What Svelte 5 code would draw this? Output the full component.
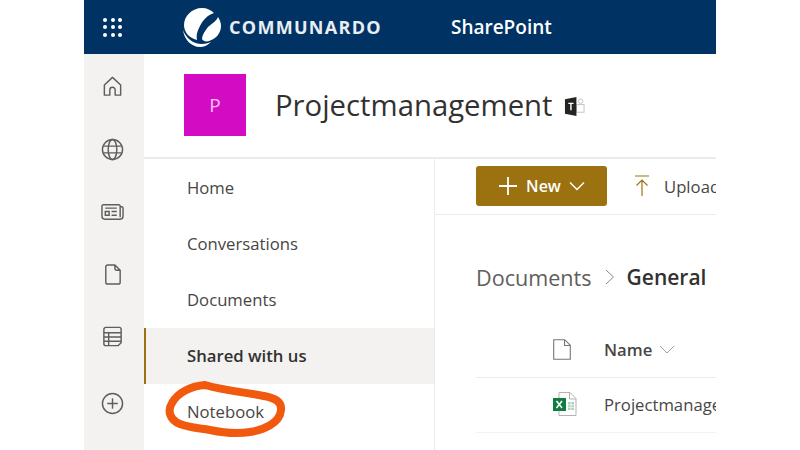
<script>
  const navItems = ['Home', 'Conversations', 'Documents', 'Shared with us', 'Notebook'];
  const dots = Array.from({ length: 9 });
</script>

<div class="page">
  <div class="frame">
    <header class="suite">
      <div class="waffle">
        {#each dots as _}
          <span></span>
        {/each}
      </div>
      <div class="logo">
        <svg width="40" height="42" viewBox="0 0 40 42">
          <path fill="#fff" d="M20 2c5 0 9 2 12 5-7 2-12 8-15 15-2 4-3 8-2 12C7 32 2 26 2 19 2 10 10 2 20 2z"/>
          <path fill="#fff" d="M36 11c2 3 3 6 3 9 0 7-5 13-12 15-3 1-6 0-7-2 0-4 3-8 6-12 3-3 8-5 10-10z"/>
          <path fill="#fff" d="M1 24c3 8 10 14 19 14 3 0 6-1 9-2-3 3-7 5-11 5C9 41 2 33 1 24z"/>
        </svg>
        <span class="brand">COMMUNARDO</span>
      </div>
      <span class="product">SharePoint</span>
    </header>

    <div class="body">
      <aside class="rail">
        <svg class="ico" viewBox="0 0 24 24">
          <path d="M3.500 21V10.500L12 2.500l8.500 8V21h-5.700v-5.500a2.800 2.800 0 0 0-5.600 0V21z" stroke-linejoin="round"/>
        </svg>
        <svg class="ico" viewBox="0 0 24 24">
          <circle cx="12" cy="12" r="10.500"/>
          <ellipse cx="12" cy="12" rx="4.500" ry="10.500"/>
          <path d="M2.500 8.500h19M2.500 15.500h19"/>
        </svg>
        <svg class="ico" viewBox="0 0 24 24">
          <path d="M20 7h1.500A1.500 1.500 0 0 1 23 8.500V17a3 3 0 0 1-3 3H4a3 3 0 0 1-3-3V6.500A1.500 1.500 0 0 1 2.500 5H18.500A1.500 1.500 0 0 1 20 6.500V18"/>
          <path d="M4.500 8.500h12M4.500 12h4v4h-4zM11 12h5.500M11 16h5.500"/>
        </svg>
        <svg class="ico" viewBox="0 0 24 24">
          <path d="M5 4a2 2 0 0 1 2-2h7.500L20 7.500V20a2 2 0 0 1-2 2H7a2 2 0 0 1-2-2zM14.500 2v3.500a2 2 0 0 0 2 2H20" stroke-linejoin="round"/>
        </svg>
        <svg class="ico" viewBox="0 0 24 24">
          <path d="M5 2.500h14a2 2 0 0 1 2 2v14l-3 3H5a2 2 0 0 1-2-2v-15a2 2 0 0 1 2-2z" stroke-linejoin="round"/>
          <path d="M3 8h18M3 12.500h18M3 17h18M8 8v13.500"/>
        </svg>
        <svg class="ico add" viewBox="0 0 24 24">
          <circle cx="12" cy="12" r="10.500"/>
          <path d="M12 6.500v11M6.500 12h11"/>
        </svg>
      </aside>

      <div class="content">
        <section class="site-head">
          <div class="tile">P</div>
          <h1>Projectmanagement</h1>
          <svg class="teams" width="21" height="21" viewBox="0 0 22 22">
            <circle cx="17.500" cy="5.500" r="2.300" fill="none" stroke="#c4c2c0"/>
            <rect x="13" y="9" width="8" height="8" fill="none" stroke="#c4c2c0"/>
            <path d="M1 3.500 13 1v20L1 18.500z" fill="#252423"/>
            <path d="M4.500 7h5.500v1.500H8V15H6.500V8.500h-2z" fill="#fff"/>
          </svg>
        </section>

        <div class="split">
          <nav class="nav">
            {#each navItems as item}
              <div class="nav-item" class:active={item === 'Shared with us'}>{item}</div>
            {/each}
          </nav>

          <main class="main">
            <div class="commands">
              <button class="new">
                <svg width="20" height="20" viewBox="0 0 20 20">
                  <path d="M10 1v18M1 10h18" stroke="#fff" stroke-width="1.800"/>
                </svg>
                <span>New</span>
                <svg width="16" height="10" viewBox="0 0 16 10">
                  <path d="M1 1.500l7 7 7-7" fill="none" stroke="#fff" stroke-width="1.500"/>
                </svg>
              </button>
              <div class="upload">
                <svg width="14" height="22" viewBox="0 0 14 22">
                  <path d="M0 1h14M7 21V5M1.500 10.500 7 5l5.500 5.500" fill="none" stroke="#9c7211" stroke-width="1.200"/>
                </svg>
                <span>Upload</span>
              </div>
            </div>

            <div class="crumbs">
              <span class="crumb">Documents</span>
              <svg width="10" height="16" viewBox="0 0 10 16">
                <path d="M1 1l7.500 7L1 15" fill="none" stroke="#8a8886" stroke-width="1"/>
              </svg>
              <strong>General</strong>
            </div>

            <div class="table-head">
              <svg class="cell-icon" width="18" height="21" viewBox="0 0 18 21">
                <path d="M.7.700h11l5.600 5.600v14H.7zM11.500.700v5.800h5.800" fill="none" stroke="#797775" stroke-width="1.100"/>
              </svg>
              <span class="name-head">Name</span>
              <svg width="16" height="9" viewBox="0 0 16 9">
                <path d="M1 1l7 7 7-7" fill="none" stroke="#a19f9d" stroke-width="1"/>
              </svg>
            </div>

            <div class="table-row">
              <svg class="cell-icon" width="24" height="24" viewBox="0 0 24 24">
                <path d="M6 .500h11l6 6v17H6z" fill="#fff" stroke="#b5b3b1"/>
                <path d="M16.500.500v6.500H23" fill="none" stroke="#b5b3b1"/>
                <path d="M15 10h6v8h-6z" fill="#a8d5ba"/>
                <path d="M18 10v8M15 12.700h6M15 15.300h6" stroke="#fff" stroke-width=".700"/>
                <rect y="6" width="13" height="13" fill="#107c41"/>
                <path d="M3.500 9l5.500 7M9 9l-5.500 7" stroke="#fff" stroke-width="1.500"/>
              </svg>
              <span class="file">Projectmanagement</span>
            </div>
          </main>
        </div>
      </div>
    </div>

    <svg class="scribble" width="122" height="62" viewBox="0 0 122 62">
      <path d="M41 7C28 8 14 14 8 25 3 33 6 42 16 46c10 4 20 4 30 6 14 3 28 4 40 2 12-2 30-8 31-22 1-9-7-12-17-14C86 15 62 13 41 7z" fill="none" stroke="#f15a0e" stroke-width="8" stroke-linecap="round" stroke-linejoin="round"/>
    </svg>
  </div>
</div>

<style>
  :global(body) {
    background: #fff;
  }

  .page {
    width: 800px;
    height: 450px;
    display: flex;
    justify-content: center;
    overflow: hidden;
    font-family: "Open Sans", "Noto Sans", sans-serif;
  }

  .frame {
    position: relative;
    width: 632px;
    height: 450px;
    overflow: hidden;
    background: #fff;
    color: #323130;
  }

  .suite {
    height: 54px;
    background: #003263;
    display: flex;
    align-items: center;
    color: #fff;
  }

  .waffle {
    display: grid;
    grid-template-columns: repeat(3, 4px);
    gap: 3.500px;
    margin-left: 19px;
  }

  .waffle span {
    width: 4px;
    height: 4px;
    border-radius: 50%;
    background: #fff;
  }

  .logo {
    display: flex;
    align-items: center;
    margin-left: 60px;
    gap: 7px;
  }

  .brand {
    font-size: 18px;
    font-weight: 700;
    letter-spacing: 1.300px;
    color: #e9eef3;
  }

  .product {
    margin-left: 69px;
    font-size: 19px;
    font-weight: 600;
  }

  .body {
    display: flex;
    height: 396px;
  }

  .rail {
    width: 60px;
    flex: none;
    background: #f3f2f1;
    box-sizing: border-box;
    padding: 21px 4px 0 0;
    display: flex;
    flex-direction: column;
    align-items: center;
    gap: 39.500px;
  }

  .ico {
    width: 23px;
    height: 23px;
    fill: none;
    stroke: #605e5c;
    stroke-width: 1.500;
  }

  .ico.add {
    margin-top: 4px;
  }

  .content {
    flex: 1;
    min-width: 0;
  }

  .site-head {
    height: 105px;
    box-sizing: border-box;
    border-bottom: 2px solid #edebe9;
    display: flex;
    align-items: center;
    padding: 0 0 1px 40px;
  }

  .tile {
    width: 62px;
    height: 62px;
    background: #d30cc4;
    color: #f7c4f0;
    font-size: 19px;
    display: flex;
    align-items: center;
    justify-content: center;
  }

  h1 {
    margin: 0 0 0 29px;
    font-size: 29.300px;
    font-weight: 500;
    color: #323130;
  }

  .teams {
    margin: 2px 0 0 11px;
  }

  .split {
    display: flex;
    height: 291px;
  }

  .nav {
    width: 291px;
    flex: none;
    box-sizing: border-box;
    border-right: 1px solid #edebe9;
    padding-top: 1px;
  }

  .nav-item {
    height: 56px;
    box-sizing: border-box;
    display: flex;
    align-items: center;
    padding: 0 0 1px 43px;
    font-size: 16.700px;
    color: #484644;
  }

  .nav-item.active {
    background: #f3f2f1;
    font-weight: 600;
    box-shadow: inset 2px 0 0 #9c7211;
    color: #323130;
  }

  .main {
    flex: 1;
    min-width: 0;
    padding-left: 41px;
    overflow: hidden;
  }

  .commands {
    height: 56px;
    margin-left: -41px;
    padding-left: 41px;
    box-sizing: border-box;
    border-bottom: 1px solid #edebe9;
    display: flex;
    align-items: flex-start;
    padding-top: 7px;
    gap: 28px;
  }

  .new {
    width: 131px;
    height: 40px;
    background: #9c7211;
    border: 0;
    border-radius: 3px;
    display: flex;
    align-items: center;
    justify-content: center;
    gap: 8px;
    color: #fff;
    font: 600 16px "Open Sans", "Noto Sans", sans-serif;
    padding: 0;
    flex: none;
  }

  .upload {
    display: flex;
    align-items: center;
    gap: 15px;
    height: 40px;
    font-size: 16.700px;
    white-space: nowrap;
    color: #484644;
  }

  .crumbs {
    margin-top: 45px;
    height: 34px;
    display: flex;
    align-items: center;
    gap: 13px;
    font-size: 21.600px;
    white-space: nowrap;
  }

  .crumb {
    color: #605e5c;
  }

  .crumbs strong {
    font-size: 21px;
    font-weight: 600;
    color: #323130;
    margin-left: -1px;
  }

  .table-head {
    margin-top: 37px;
    height: 47px;
    box-sizing: border-box;
    border-bottom: 1px solid #edebe9;
    display: flex;
    align-items: center;
    gap: 7px;
    padding-bottom: 9px;
    white-space: nowrap;
  }

  .cell-icon {
    flex: none;
    margin-left: 77px;
    margin-right: 27px;
  }

  .name-head {
    font-size: 16.700px;
    font-weight: 600;
    color: #484644;
    margin-left: -1px;
  }

  .table-row {
    height: 55px;
    box-sizing: border-box;
    border-bottom: 1px solid #f3f2f1;
    display: flex;
    align-items: center;
    padding-bottom: 2px;
    white-space: nowrap;
    font-size: 16.700px;
    color: #484644;
  }

  .scribble {
    position: absolute;
    left: 80px;
    top: 378px;
  }
</style>
